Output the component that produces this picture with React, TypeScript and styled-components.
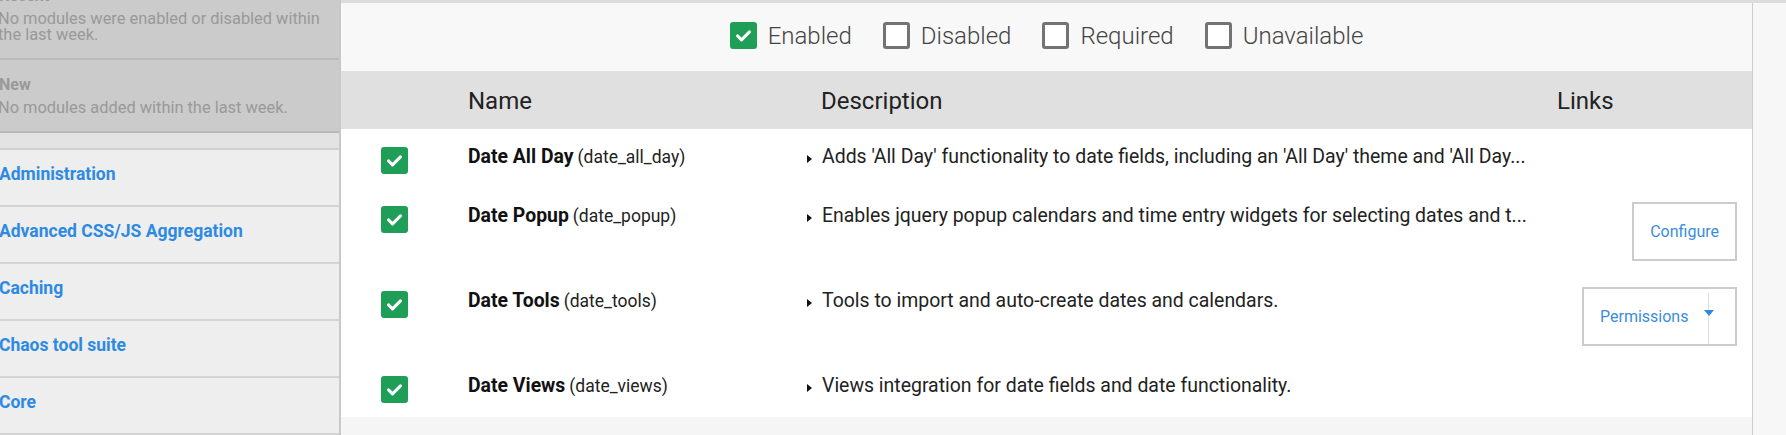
import styled, { createGlobalStyle } from "styled-components";

const GlobalStyle = createGlobalStyle`
  html,
  body {
    margin: 0;
    padding: 0;
    background: #f7f7f7;
    font-family: Roboto, "Liberation Sans", Arial, sans-serif;
    color: #222;
  }
`;

const categories = [
  "Administration",
  "Advanced CSS/JS Aggregation",
  "Caching",
  "Chaos tool suite",
  "Core",
];

const filters = [
  { label: "Enabled", checked: true },
  { label: "Disabled", checked: false },
  { label: "Required", checked: false },
  { label: "Unavailable", checked: false },
];

interface Module {
  name: string;
  machine: string;
  description: string;
  link?: "configure" | "permissions";
}

const modules: Module[] = [
  {
    name: "Date All Day",
    machine: "date_all_day",
    description:
      "Adds 'All Day' functionality to date fields, including an 'All Day' theme and 'All Day...",
  },
  {
    name: "Date Popup",
    machine: "date_popup",
    description:
      "Enables jquery popup calendars and time entry widgets for selecting dates and t...",
    link: "configure",
  },
  {
    name: "Date Tools",
    machine: "date_tools",
    description: "Tools to import and auto-create dates and calendars.",
    link: "permissions",
  },
  {
    name: "Date Views",
    machine: "date_views",
    description: "Views integration for date fields and date functionality.",
  },
];

export default function App() {
  return (
    <>
      <GlobalStyle />
      <Page>
        <Sidebar>
          <Summary>
            <SummaryTitle>Recent</SummaryTitle>
            <SummaryText>
              No modules were enabled or disabled within the last week.
            </SummaryText>
          </Summary>
          <Summary>
            <SummaryTitle>New</SummaryTitle>
            <SummaryText>No modules added within the last week.</SummaryText>
          </Summary>
          <Spacer />
          {categories.map((c) => (
            <Category key={c}>
              <CategoryLink href="#">{c}</CategoryLink>
            </Category>
          ))}
        </Sidebar>
        <Content>
          <Panel>
            <FilterBar>
              {filters.map((f) => (
                <FilterOption key={f.label}>
                  <Checkbox checked={f.checked} />
                  {f.label}
                </FilterOption>
              ))}
            </FilterBar>
            <HeadRow>
              <span />
              <HeadCell>Name</HeadCell>
              <HeadCell $indent>Description</HeadCell>
              <HeadCell>Links</HeadCell>
            </HeadRow>
            <Rows>
              {modules.map((m) => (
                <Row key={m.machine}>
                  <CheckCell>
                    <Checkbox checked />
                  </CheckCell>
                  <NameCell>
                    <ModuleName>{m.name}</ModuleName>{" "}
                    <MachineName>({m.machine})</MachineName>
                  </NameCell>
                  <DescCell>
                    <Arrow />
                    <DescText>{m.description}</DescText>
                  </DescCell>
                  <LinksCell>
                    {m.link === "configure" && (
                      <LinkButton>Configure</LinkButton>
                    )}
                    {m.link === "permissions" && (
                      <DropButton>
                        <DropLabel>Permissions</DropLabel>
                        <DropToggle />
                      </DropButton>
                    )}
                  </LinksCell>
                </Row>
              ))}
            </Rows>
          </Panel>
        </Content>
      </Page>
    </>
  );
}

function Checkbox({ checked }: { checked: boolean }) {
  return (
    <Box $checked={checked}>
      {checked && (
        <svg width="19" height="19" viewBox="0 0 24 24" fill="none">
          <path
            d="M4.5 12.5l5 5L19.5 7.5"
            stroke="#fff"
            strokeWidth="3.8"
            strokeLinecap="round"
            strokeLinejoin="round"
          />
        </svg>
      )}
    </Box>
  );
}

const Page = styled.div`
  display: flex;
  height: 435px;
  overflow: hidden;
`;

// the sidebar is scrolled a little, so its first block is cut at the top
const Sidebar = styled.nav`
  flex: none;
  width: 339px;
  margin-top: -29px;
  background: #eeeeee;
  border-right: 2px solid #c8c8c8;
`;

const Summary = styled.div`
  padding: 16px 12px 15px 0;
  background: #cbcbcb;
  color: #999;
  border-bottom: 2px solid #bababa;
`;

const SummaryTitle = styled.div`
  margin-left: -1px;
  font-size: 16px;
  font-weight: 700;
  line-height: 18px;
  margin-bottom: 6px;
`;

const SummaryText = styled.div`
  margin-left: -2px;
  font-size: 16.4px;
  line-height: 16px;
`;

const Spacer = styled.div`
  height: 15px;
  background: #e3e3e3;
  border-bottom: 2px solid #d0d0d0;
`;

const Category = styled.div`
  height: 57px;
  padding-top: 14px;
  box-sizing: border-box;
  border-bottom: 2px solid #d4d4d4;
`;

const CategoryLink = styled.a`
  margin-left: -1px;
  font-size: 17.5px;
  font-weight: 700;
  line-height: 21px;
  color: #2d8ae2;
  text-decoration: none;
`;

const Content = styled.main`
  flex: 1;
  display: flex;
  border-top: 3px solid #dcdcdc;
  background: #f7f7f7;
`;

const Panel = styled.section`
  width: 1411px;
  flex: none;
  background: #f5f5f5;
  border-right: 1px solid #cdcdcd;
`;

const FilterBar = styled.div`
  height: 68px;
  box-sizing: border-box;
  padding-bottom: 3px;
  display: flex;
  align-items: center;
  justify-content: center;
  gap: 31px;
  background: #f8f8f8;
`;

const FilterOption = styled.label`
  display: flex;
  align-items: center;
  gap: 11px;
  font-size: 24px;
  font-weight: 300;
  color: #444;
`;

const Box = styled.span<{ $checked: boolean }>`
  width: 27px;
  height: 27px;
  box-sizing: border-box;
  display: inline-flex;
  align-items: center;
  justify-content: center;
  border-radius: 3px;
  background: ${(p) => (p.$checked ? "#1f9e58" : "#fff")};
  border: ${(p) => (p.$checked ? "none" : "3px solid #737373")};
`;

const grid = `
  display: grid;
  grid-template-columns: 127px 339px 750px 1fr;
`;

const HeadRow = styled.div`
  ${grid}
  height: 58px;
  align-items: center;
  background: #e0e0e0;
`;

const HeadCell = styled.div<{ $indent?: boolean }>`
  padding-left: ${(p) => (p.$indent ? "14px" : "0")};
  padding-top: 2px;
  font-size: 24px;
  color: #222;
`;

const Rows = styled.div`
  background: #fff;
`;

const Row = styled.div`
  ${grid}
  align-items: start;
  padding: 14px 0 12px;
`;

const CheckCell = styled.div`
  padding: 4px 0 2px 40px;
  display: flex;
`;

const NameCell = styled.div`
  padding-top: 2px;
  line-height: 24px;
  white-space: nowrap;
`;

const ModuleName = styled.strong`
  font-size: 19.4px;
  font-weight: 700;
  color: #111;
`;

const MachineName = styled.span`
  font-size: 17.5px;
  color: #222;
`;

const DescCell = styled.div`
  padding: 2px 16px 0 0;
  display: flex;
  align-items: center;
  gap: 10px;
  min-width: 0;
  line-height: 24px;
`;

const Arrow = styled.span`
  flex: none;
  width: 0;
  height: 0;
  margin-top: 3px;
  border-top: 4.5px solid transparent;
  border-bottom: 4.5px solid transparent;
  border-left: 5px solid #111;
`;

const DescText = styled.span`
  font-size: 19.45px;
  color: #222;
  white-space: nowrap;
  overflow: hidden;
`;

const LinksCell = styled.div`
  display: flex;
  justify-content: flex-end;
  padding-right: 15px;
`;

const LinkButton = styled.a`
  display: inline-flex;
  align-items: center;
  height: 59px;
  box-sizing: border-box;
  padding: 0 16px;
  border: 2px solid #cccccc;
  background: #fff;
  font-size: 16px;
  color: #3a8ddd;
  cursor: pointer;
`;

const DropButton = styled.div`
  display: flex;
  width: 155px;
  height: 59px;
  box-sizing: border-box;
  border: 2px solid #cccccc;
  background: #fff;
`;

const DropLabel = styled.span`
  flex: 1;
  display: flex;
  align-items: center;
  padding: 0 0 0 16px;
  font-size: 16px;
  color: #3a8ddd;
`;

const DropToggle = styled.span`
  position: relative;
  width: 26px;
  margin-top: 4px;
  border-left: 1px solid #dedede;

  &::before {
    content: "";
    position: absolute;
    left: -5px;
    top: 17px;
    border-left: 5.5px solid transparent;
    border-right: 5.5px solid transparent;
    border-top: 6px solid #2d8ae2;
  }
`;
